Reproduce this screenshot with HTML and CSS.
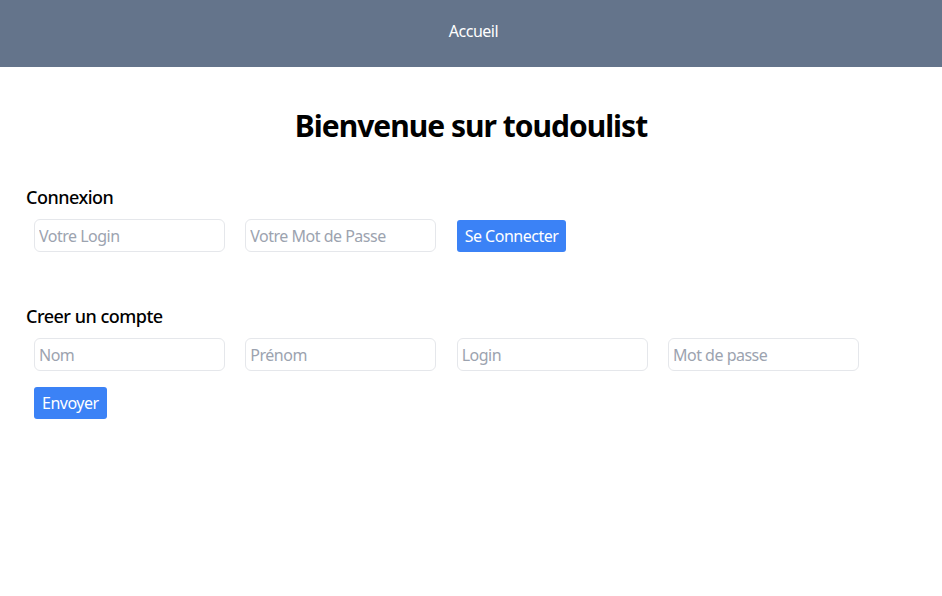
FILE: index.html
```html
<!DOCTYPE html>
<html lang="fr">
<head>
<meta charset="utf-8">
<title>toudoulist</title>
<link rel="stylesheet" href="styles.css">
</head>
<body>
<header class="topbar"><a class="nav-link" href="#">Accueil</a></header>
<main class="page">
  <h1 class="title">Bienvenue sur toudoulist</h1>
  <section class="block">
    <h2 class="block-title">Connexion</h2>
    <div class="row">
      <input class="field" type="text" placeholder="Votre Login">
      <input class="field" type="password" placeholder="Votre Mot de Passe">
      <button class="btn" type="button">Se Connecter</button>
    </div>
  </section>
  <section class="block block-second">
    <h2 class="block-title">Creer un compte</h2>
    <div class="row">
      <input class="field" type="text" placeholder="Nom">
      <input class="field" type="text" placeholder="Prénom">
      <input class="field" type="text" placeholder="Login">
      <input class="field" type="password" placeholder="Mot de passe">
    </div>
    <div class="row row-btn">
      <button class="btn" type="button">Envoyer</button>
    </div>
  </section>
</main>
</body>
</html>
```
FILE: styles.css
```css
* { box-sizing: border-box; }
html, body { margin: 0; padding: 0; background: #fff; }
body { font-family: "Noto Sans", "Open Sans", sans-serif; color: #000; letter-spacing: -0.5px; }
.topbar {
  height: 67px;
  background: #64748b;
  display: flex;
  align-items: center;
  justify-content: center;
}
.nav-link { color: #fff; text-decoration: none; font-size: 16px; line-height: 24px; margin-top: -5px; margin-left: 5px; }
.page { padding: 0 26px; }
.title {
  margin: 41px 0 0;
  font-size: 30px;
  line-height: 36px;
  font-weight: 700;
  text-align: center;
  letter-spacing: -1px;
}
.block { margin-top: 39px; }
.block-second { margin-top: 50px; }
.block-title {
  margin: 0;
  font-size: 18px;
  line-height: 28px;
  font-weight: 500;
}
.row {
  display: flex;
  align-items: center;
  gap: 20.33px;
  padding: 8px 8px 0;
}
.row-btn { padding-top: 16px; }
.field {
  width: 191px;
  height: 33px;
  border: 1px solid #e5e7eb;
  border-radius: 6px;
  padding: 0 4px;
  font-family: inherit;
  font-size: 16px;
  letter-spacing: -0.5px;
  color: #111;
  background: #fff;
  outline: none;
}
.field::placeholder { color: #9ca3af; }
.btn {
  height: 32px;
  padding: 0 8px;
  border: none;
  border-radius: 3px;
  background: #3b82f6;
  color: #fff;
  font-family: inherit;
  font-size: 16px;
  letter-spacing: -0.5px;
  cursor: pointer;
}
```
